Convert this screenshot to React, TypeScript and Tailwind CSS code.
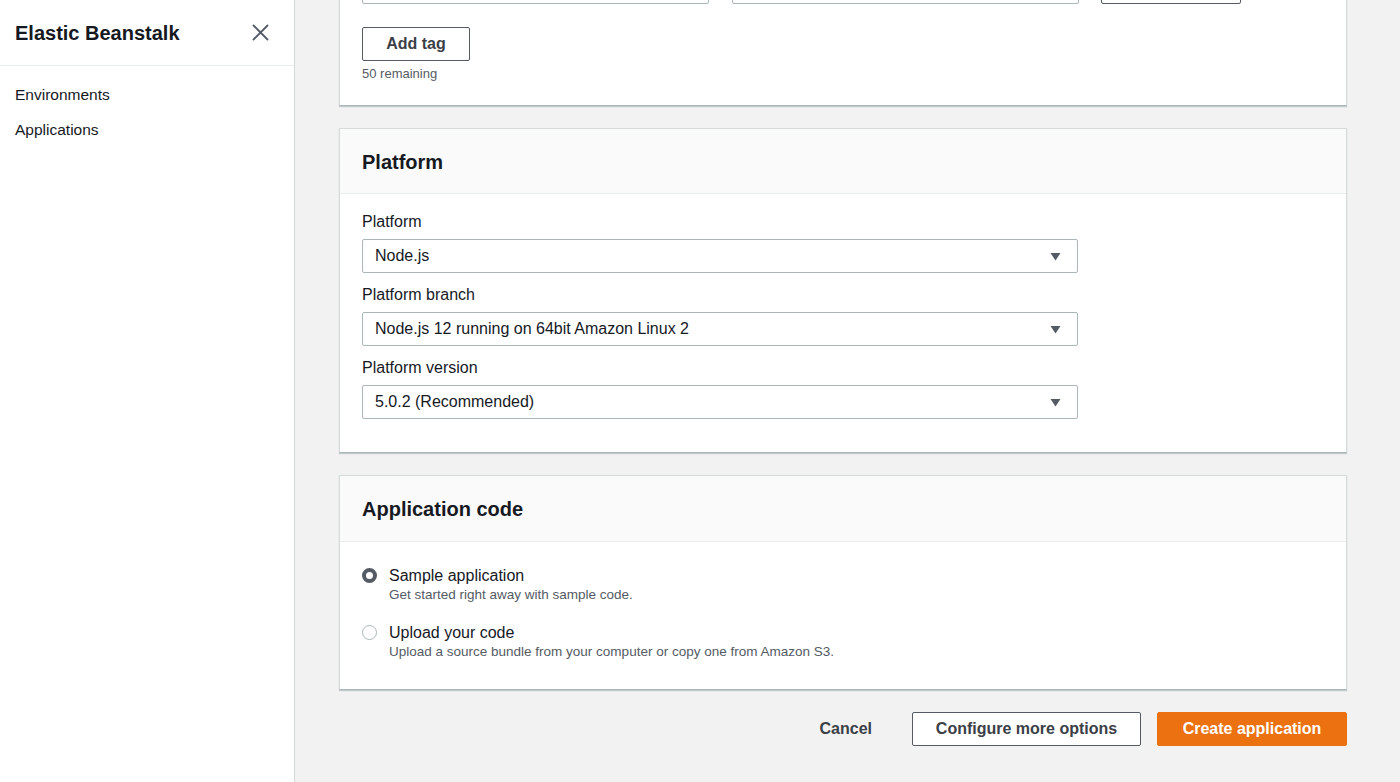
import React from "react";

const font = { fontFamily: '"Liberation Sans", Arial, Helvetica, sans-serif' };

function Caret() {
  return (
    <svg width="11" height="9" viewBox="0 0 11 9" className="shrink-0">
      <path d="M0.5 1 L10.5 1 L5.5 8.5 Z" fill="#545b64" />
    </svg>
  );
}

function Select({ value }: { value: string }) {
  return (
    <div className="flex h-[34px] w-[716px] items-center justify-between rounded-[2px] border border-[#aab7b8] bg-white pl-[12px] pr-[16px] text-[16px] text-[#16191f]">
      <span>{value}</span>
      <Caret />
    </div>
  );
}

function Field({ label, value, first }: { label: string; value: string; first?: boolean }) {
  return (
    <div className={first ? "" : "mt-[12px]"}>
      <div className="mb-[7px] h-[20px] text-[16px] leading-[20px] text-[#16191f]">{label}</div>
      <Select value={value} />
    </div>
  );
}

const cardCls =
  "bg-white border border-[#d5dbdb] border-b-[#aab7b8] shadow-[0_1px_1px_0_rgba(0,28,36,0.2)]";

function Radio({ checked }: { checked?: boolean }) {
  return checked ? (
    <span className="mt-[2px] box-border block h-[15px] w-[15px] shrink-0 rounded-full border-[4px] border-[#545b64] bg-white" />
  ) : (
    <span className="mt-[2px] box-border block h-[15px] w-[15px] shrink-0 rounded-full border border-[#aab7b8] bg-white" />
  );
}

export default function App() {
  return (
    <div className="flex h-[782px] w-[1400px] overflow-hidden bg-[#f2f2f2]" style={font}>
      {/* Sidebar */}
      <aside className="flex h-full w-[295px] shrink-0 flex-col border-r border-[#d5dbdb] bg-white">
        <div className="flex h-[66px] items-center justify-between border-b border-[#eaeded] pl-[15px] pr-[25px]">
          <span className="text-[20px] font-bold text-[#16191f]">Elastic Beanstalk</span>
          <svg width="17" height="17" viewBox="0 0 17 17">
            <path d="M1.5 1.5 L15.5 15.5 M15.5 1.5 L1.5 15.5" stroke="#545b64" strokeWidth="1.8" strokeLinecap="round" />
          </svg>
        </div>
        <nav className="flex flex-col pl-[15px] pt-[18px] text-[15.5px] text-[#16191f]">
          <span className="h-[22px] leading-[22px]">Environments</span>
          <span className="mt-[13px] h-[22px] leading-[22px]">Applications</span>
        </nav>
      </aside>

      {/* Main */}
      <main className="flex-1 pl-[44px] pr-[53px]">
        {/* Tags card (scrolled) */}
        <section className={`${cardCls} -mt-[41px] px-[22px] pt-[9px] pb-[23px]`}>
          <div className="flex items-center">
            <div className="h-[35px] w-[347px] rounded-[2px] border border-[#aab7b8] bg-white" />
            <div className="ml-[23px] h-[35px] w-[347px] rounded-[2px] border border-[#aab7b8] bg-white" />
            <div className="ml-[22px] h-[35px] w-[140px] rounded-[2px] border border-[#545b64] bg-white" />
          </div>
          <button className="mt-[23px] flex h-[34px] w-[108px] items-center justify-center rounded-[2px] border border-[#545b64] bg-white text-[16px] font-bold text-[#3b4047]">
            Add tag
          </button>
          <div className="mt-[5px] h-[16px] text-[13px] leading-[16px] text-[#545b64]">50 remaining</div>
        </section>

        {/* Platform card */}
        <section className={`${cardCls} mt-[22px]`}>
          <div className="flex h-[65px] items-center border-b border-[#eaeded] bg-[#fafafa] px-[22px] pt-[2px]">
            <h2 className="text-[20px] font-bold text-[#16191f]">Platform</h2>
          </div>
          <div className="px-[22px] pt-[18px] pb-[33px]">
            <Field first label="Platform" value="Node.js" />
            <Field label="Platform branch" value="Node.js 12 running on 64bit Amazon Linux 2" />
            <Field label="Platform version" value="5.0.2 (Recommended)" />
          </div>
        </section>

        {/* Application code card */}
        <section className={`${cardCls} mt-[22px]`}>
          <div className="flex h-[66px] items-center border-b border-[#eaeded] bg-[#fafafa] px-[22px] pt-[1px]">
            <h2 className="text-[20px] font-bold text-[#16191f]">Application code</h2>
          </div>
          <div className="px-[22px] pt-[24px] pb-[28px]">
            <div className="flex gap-[12px]">
              <Radio checked />
              <div>
                <div className="h-[20px] text-[16px] leading-[20px] text-[#16191f]">Sample application</div>
                <div className="h-[18px] text-[13.5px] leading-[18px] text-[#545b64]">Get started right away with sample code.</div>
              </div>
            </div>
            <div className="mt-[19px] flex gap-[12px]">
              <Radio />
              <div>
                <div className="h-[20px] text-[16px] leading-[20px] text-[#16191f]">Upload your code</div>
                <div className="h-[18px] text-[13.5px] leading-[18px] text-[#545b64]">
                  Upload a source bundle from your computer or copy one from Amazon S3.
                </div>
              </div>
            </div>
          </div>
        </section>

        {/* Actions */}
        <div className="mt-[22px] flex items-center justify-end">
          <button className="mr-[20px] h-[34px] px-[20px] text-[16px] font-bold text-[#3b4047]">Cancel</button>
          <button className="h-[34px] w-[229px] rounded-[2px] border border-[#545b64] bg-white text-[16px] font-bold text-[#3b4047]">
            Configure more options
          </button>
          <button className="ml-[16px] h-[34px] w-[190px] rounded-[2px] border border-[#ec7211] bg-[#ec7211] text-[16px] font-bold text-white">
            Create application
          </button>
        </div>
      </main>
    </div>
  );
}
